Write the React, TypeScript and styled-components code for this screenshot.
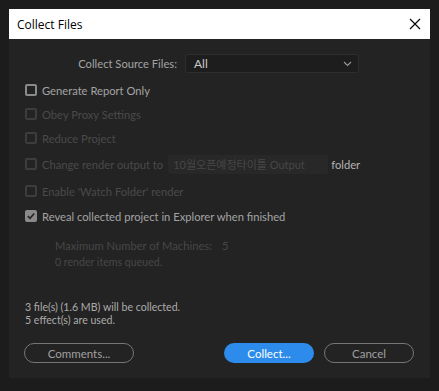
import React from "react";
import styled, { createGlobalStyle } from "styled-components";

const Global = createGlobalStyle`
  html, body { margin: 0; padding: 0; background: #1c1c1c; }
  body { font-family: Lato, "Noto Sans CJK KR", sans-serif; }
`;

const Page = styled.div`
  width: 439px;
  height: 391px;
  padding: 9px 9px 0 9px;
  box-sizing: border-box;
`;

const Dialog = styled.div`
  width: 421px;
  height: 369px;
  background: #232323;
  display: flex;
  flex-direction: column;
`;

const TitleBar = styled.div`
  height: 30px;
  background: #ffffff;
  display: flex;
  align-items: center;
  justify-content: space-between;
  padding: 0 9px 0 8px;
  font-family: "Open Sans", sans-serif;
  font-size: 12px;
  color: #000;
`;

const Body = styled.div`
  flex: 1;
  display: flex;
  flex-direction: column;
  padding: 15px 16px 0 16px;
  font-size: 11.2px;
`;

const SelectRow = styled.div`
  display: flex;
  align-items: center;
  justify-content: flex-end;
  gap: 8px;
  padding-right: 55px;
  height: 19px;
  margin-bottom: 5px;
`;

const Label = styled.span<{ $dim?: boolean; $bright?: boolean }>`
  color: ${(p) => (p.$dim ? "#4a4a4a" : p.$bright ? "#b4b4b4" : "#a3a3a3")};
  white-space: nowrap;
`;

const Select = styled.div`
  width: 174px;
  height: 19px;
  box-sizing: border-box;
  background: #1d1d1d;
  border: 1px solid #2e2e2e;
  border-radius: 3px;
  display: flex;
  align-items: center;
  justify-content: space-between;
  padding: 0 6px 0 8px;
  color: #c8c8c8;
  font-size: 12px;
`;

const Row = styled.div<{ $h?: number }>`
  height: ${(p) => p.$h ?? 24}px;
  display: flex;
  align-items: center;
  gap: 5px;
`;

const Box = styled.span<{ $dim?: boolean; $checked?: boolean }>`
  width: 12px;
  height: 12px;
  box-sizing: border-box;
  border: 2px solid ${(p) => (p.$dim ? "#3d3d3d" : "#8a8a8a")};
  border-radius: 2px;
  background: ${(p) => (p.$checked ? "#8a8a8a" : "transparent")};
  display: inline-flex;
  align-items: center;
  justify-content: center;
  flex: none;
`;

const Field = styled.span`
  height: 19px;
  width: 160px;
  box-sizing: border-box;
  background: #282828;
  border-radius: 2px;
  color: #474747;
  display: inline-flex;
  align-items: center;
  padding-left: 5px;
  margin-right: -2px;
  white-space: nowrap;
  font-size: 11px;
`;

const Sub = styled.div`
  padding-left: 30px;
  display: flex;
  flex-direction: column;
  margin-top: 8px;
`;

const SubLine = styled.div<{ $small?: boolean }>`
  color: #474747;
  font-size: ${(p) => (p.$small ? "10.6px" : "11.2px")};
  height: ${(p) => (p.$small ? 16 : 18)}px;
  display: flex;
  align-items: center;
  gap: 10px;
`;

const Info = styled.div`
  margin-top: 31px;
  color: #ababab;
  font-size: 10.6px;
  line-height: 13px;
`;

const Buttons = styled.div`
  margin-top: 16px;
  margin-left: -1px;
  display: flex;
  align-items: center;
  gap: 10px;
`;

const Btn = styled.button<{ $primary?: boolean; $w?: number }>`
  height: 20px;
  width: ${(p) => p.$w ?? 90}px;
  border-radius: 10px;
  font-family: Lato, sans-serif;
  font-size: 11.5px;
  padding: 0;
  box-sizing: border-box;
  border: ${(p) => (p.$primary ? "none" : "1px solid #767676")};
  background: ${(p) => (p.$primary ? "#2d8ceb" : "transparent")};
  color: ${(p) => (p.$primary ? "#ffffff" : "#a0a0a0")};
`;

const Spacer = styled.div`
  flex: 1;
`;

const checks = [
  { label: "Generate Report Only", dim: false },
  { label: "Obey Proxy Settings", dim: true },
  { label: "Reduce Project", dim: true },
];

export default function App() {
  return (
    <Page>
      <Global />
      <Dialog>
        <TitleBar>
          <span>Collect Files</span>
          <svg width="12" height="12" viewBox="0 0 12 12">
            <path d="M1 1 L11 11 M11 1 L1 11" stroke="#000" strokeWidth="1.1" />
          </svg>
        </TitleBar>
        <Body>
          <SelectRow>
            <Label>Collect Source Files:</Label>
            <Select>
              <span>All</span>
              <svg width="9" height="6" viewBox="0 0 9 6">
                <path d="M1 1 L4.5 4.5 L8 1" stroke="#9a9a9a" strokeWidth="1.1" fill="none" />
              </svg>
            </Select>
          </SelectRow>
          {checks.map((c) => (
            <Row key={c.label}>
              <Box $dim={c.dim} />
              <Label $dim={c.dim}>{c.label}</Label>
            </Row>
          ))}
          <Row $h={28}>
            <Box $dim />
            <Label $dim>Change render output to</Label>
            <Field>10월오픈예정타이틀 Output</Field>
            <Label $bright>folder</Label>
          </Row>
          <Row $h={26}>
            <Box $dim />
            <Label $dim>Enable 'Watch Folder' render</Label>
          </Row>
          <Row>
            <Box $checked>
              <svg width="8" height="8" viewBox="0 0 8 8">
                <path d="M0.8 4.2 L3 6.3 L7.2 1.5" stroke="#232323" strokeWidth="1.6" fill="none" />
              </svg>
            </Box>
            <Label>Reveal collected project in Explorer when finished</Label>
          </Row>
          <Sub>
            <SubLine>
              <span>Maximum Number of Machines:</span>
              <span>5</span>
            </SubLine>
            <SubLine $small>0 render items queued.</SubLine>
          </Sub>
          <Info>
            <div>3 file(s) (1.6 MB) will be collected.</div>
            <div>5 effect(s) are used.</div>
          </Info>
          <Buttons>
            <Btn $w={110}>Comments...</Btn>
            <Spacer />
            <Btn $primary>Collect...</Btn>
            <Btn>Cancel</Btn>
          </Buttons>
        </Body>
      </Dialog>
    </Page>
  );
}
